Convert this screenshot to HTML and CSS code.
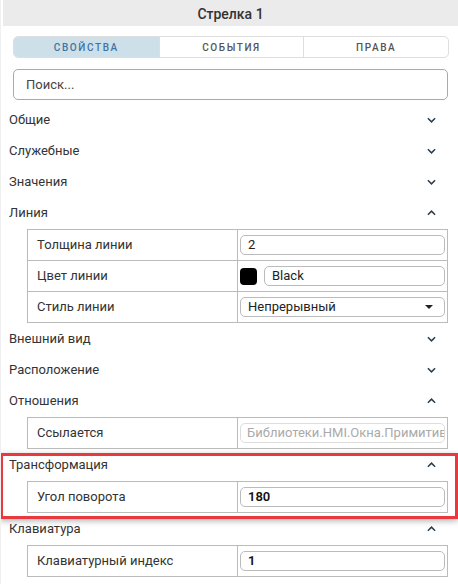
FILE: index.html
```html
<!DOCTYPE html>
<html lang="ru">
<head>
  <meta charset="UTF-8">
  <title>Стрелка 1</title>
  <link rel="stylesheet" href="styles.css">
</head>
<body>
  <div class="panel">
    <div class="header">Стрелка 1</div>

    <div class="tabs">
      <div class="tab active">СВОЙСТВА</div>
      <div class="tab">СОБЫТИЯ</div>
      <div class="tab">ПРАВА</div>
    </div>

    <div class="search">Поиск...</div>

    <div class="sections">
      <div class="section">
        <div class="section-head"><span>Общие</span><svg class="chev" viewBox="0 0 10 6"><polyline points="1,1 5,5 9,1"/></svg></div>
      </div>
      <div class="section">
        <div class="section-head"><span>Служебные</span><svg class="chev" viewBox="0 0 10 6"><polyline points="1,1 5,5 9,1"/></svg></div>
      </div>
      <div class="section">
        <div class="section-head"><span>Значения</span><svg class="chev" viewBox="0 0 10 6"><polyline points="1,1 5,5 9,1"/></svg></div>
      </div>

      <div class="section">
        <div class="section-head"><span>Линия</span><svg class="chev" viewBox="0 0 10 6"><polyline points="1,5 5,1 9,5"/></svg></div>
        <div class="props">
          <div class="prop">
            <div class="prop-name">Толщина линии</div>
            <div class="prop-value"><div class="field">2</div></div>
          </div>
          <div class="prop">
            <div class="prop-name">Цвет линии</div>
            <div class="prop-value"><span class="swatch"></span><div class="field">Black</div></div>
          </div>
          <div class="prop">
            <div class="prop-name">Стиль линии</div>
            <div class="prop-value"><div class="field select">Непрерывный<span class="caret"></span></div></div>
          </div>
        </div>
      </div>

      <div class="section">
        <div class="section-head"><span>Внешний вид</span><svg class="chev" viewBox="0 0 10 6"><polyline points="1,1 5,5 9,1"/></svg></div>
      </div>
      <div class="section">
        <div class="section-head"><span>Расположение</span><svg class="chev" viewBox="0 0 10 6"><polyline points="1,1 5,5 9,1"/></svg></div>
      </div>

      <div class="section">
        <div class="section-head"><span>Отношения</span><svg class="chev" viewBox="0 0 10 6"><polyline points="1,5 5,1 9,5"/></svg></div>
        <div class="props">
          <div class="prop">
            <div class="prop-name">Ссылается</div>
            <div class="prop-value"><div class="field disabled">Библиотеки.HMI.Окна.Примитивы</div></div>
          </div>
        </div>
      </div>

      <div class="section">
        <div class="section-head"><span>Трансформация</span><svg class="chev" viewBox="0 0 10 6"><polyline points="1,5 5,1 9,5"/></svg></div>
        <div class="props">
          <div class="prop">
            <div class="prop-name">Угол поворота</div>
            <div class="prop-value"><div class="field strong">180</div></div>
          </div>
        </div>
      </div>

      <div class="section">
        <div class="section-head"><span>Клавиатура</span><svg class="chev" viewBox="0 0 10 6"><polyline points="1,5 5,1 9,5"/></svg></div>
        <div class="props">
          <div class="prop">
            <div class="prop-name">Клавиатурный индекс</div>
            <div class="prop-value"><div class="field strong">1</div></div>
          </div>
        </div>
      </div>
    </div>

    <!-- выделение раздела -->
    <div class="highlight"></div>
  </div>
</body>
</html>
```

FILE: styles.css
```css
body {
  margin: 0;
  font-family: 'Roboto', 'Liberation Sans', sans-serif;
  background-color: #fff;
  color: #333;
}

.panel {
  position: relative;
  width: 458px;
  height: 584px;
  overflow: hidden;
  border-left: 1px solid #f0f0f0;
  box-sizing: border-box;
}

.header {
  height: 26px;
  margin-left: 2px;
  background-color: #ebebeb;
  font-size: 14px;
  font-weight: 500;
  line-height: 28px;
  text-align: center;
  color: #333;
}

.tabs {
  display: grid;
  grid-template-columns: 1fr 1fr 1fr;
  margin: 10px 9px 0 12px;
  height: 22px;
  border: 1px solid #dedede;
  border-radius: 5px;
  overflow: hidden;
  box-sizing: border-box;
}

.tab {
  font-size: 10px;
  font-weight: 500;
  letter-spacing: 1.6px;
  line-height: 21px;
  text-align: center;
  color: #555;
  border-left: 1px solid #dedede;
}

.tab:first-child {
  border-left: none;
}

.tab.active {
  background-color: #cde0ea;
  color: #3f74a3;
}

.search {
  margin: 11px 10px 0 12px;
  height: 31px;
  border: 1px solid #aaa;
  border-radius: 5px;
  box-sizing: border-box;
  padding-left: 12px;
  font-size: 13px;
  line-height: 30px;
  color: #444;
}

.sections {
  margin-top: 4px;
}

.section-head {
  display: flex;
  align-items: center;
  justify-content: space-between;
  height: 31px;
  padding: 0 22px 0 8px;
  font-size: 13px;
  color: #333;
}

.chev {
  width: 9px;
  height: 6px;
  fill: none;
  stroke: #2d3e50;
  stroke-width: 1.7;
}

.props {
  margin: 1px 10px 0 26px;
  border: 1px solid #bbb;
  border-bottom: none;
}

.prop {
  display: flex;
  height: 31px;
  border-bottom: 1px solid #bbb;
  box-sizing: border-box;
}

.prop-name {
  width: 210px;
  padding-left: 9px;
  border-right: 1px solid #bbb;
  font-size: 13px;
  line-height: 30px;
  color: #333;
  box-sizing: border-box;
}

.prop-value {
  flex: 1;
  display: flex;
  align-items: center;
  gap: 7px;
  padding: 0 2px 0 2px;
  min-width: 0;
}

.field {
  position: relative;
  flex: 1;
  height: 20px;
  border: 1px solid #bbb;
  border-radius: 5px;
  box-sizing: border-box;
  padding-left: 7px;
  font-size: 13px;
  line-height: 18px;
  color: #222;
  white-space: nowrap;
  overflow: hidden;
}

.field.disabled {
  color: #aaa;
  border-color: #ddd;
  padding-left: 6px;
}

.field.strong {
  font-weight: 600;
  color: #111;
}

.swatch {
  width: 17px;
  height: 17px;
  border-radius: 4px;
  background-color: #000;
  flex-shrink: 0;
}

.caret {
  position: absolute;
  right: 11px;
  top: 7px;
  border-left: 4px solid transparent;
  border-right: 4px solid transparent;
  border-top: 4px solid #222;
}

.highlight {
  position: absolute;
  left: -1px;
  top: 453px;
  width: 458px;
  height: 66px;
  border: 3px solid #e8393f;
  box-sizing: border-box;
  box-shadow: 0 2px 6px rgba(0, 0, 0, 0.3);
  pointer-events: none;
}
```
